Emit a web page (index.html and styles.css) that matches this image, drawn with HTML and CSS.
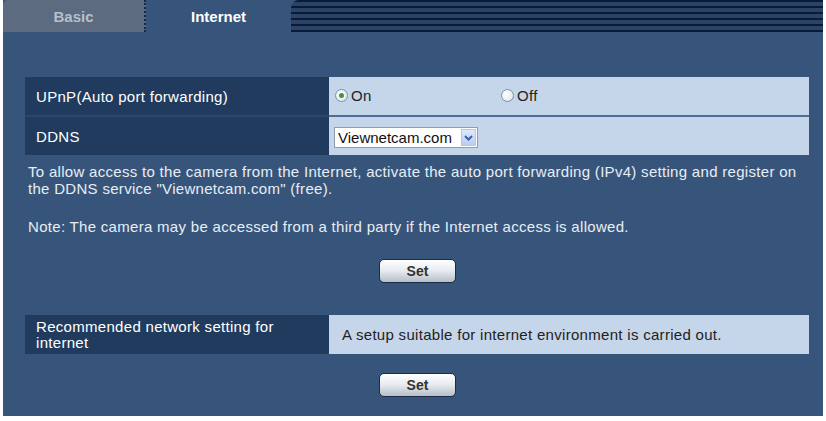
FILE: index.html
```html
<!DOCTYPE html>
<html lang="en">
<head>
    <meta charset="UTF-8">
    <meta name="viewport" content="width=device-width, initial-scale=1.0">
    <title>Internet</title>
    <link rel="stylesheet" href="styles.css">
</head>
<body>
    <div class="panel">
        <div class="tabs">
            <div class="tab tab-basic">Basic</div>
            <div class="tab tab-active">Internet</div>
            <div class="tab-rest"></div>
        </div>
        <div class="content">
            <table class="settings">
                <tr>
                    <th class="sep">UPnP(Auto port forwarding)</th>
                    <td class="sep">
                        <label class="radio"><span class="dot checked"></span>On</label>
                        <label class="radio radio-off"><span class="dot"></span>Off</label>
                    </td>
                </tr>
                <tr>
                    <th>DDNS</th>
                    <td>
                        <div class="select">
                            <span class="select-text">Viewnetcam.com</span>
                            <span class="select-arrow">
                                <svg width="9" height="6" viewBox="0 0 9 6"><path d="M1 1 L4.5 4.5 L8 1" fill="none" stroke="#3a5fb0" stroke-width="2"/></svg>
                            </span>
                        </div>
                    </td>
                </tr>
            </table>
            <p class="info">To allow access to the camera from the Internet, activate the auto port forwarding (IPv4) setting and register on the DDNS service "Viewnetcam.com" (free).</p>
            <p class="info note">Note: The camera may be accessed from a third party if the Internet access is allowed.</p>
            <div class="actions"><button class="btn">Set</button></div>

            <table class="settings second">
                <tr>
                    <th class="two-line">Recommended network setting for internet</th>
                    <td class="text-cell">A setup suitable for internet environment is carried out.</td>
                </tr>
            </table>
            <div class="actions last"><button class="btn">Set</button></div>
        </div>
    </div>
</body>
</html>
```

FILE: styles.css
```css
body {
    margin: 0;
    padding: 0;
    background-color: #fff;
    font-family: "Liberation Sans", Arial, sans-serif;
}
.panel {
    width: 820px;
    height: 416px;
    margin-left: 3px;
    background-color: #37557a;
}
.tabs {
    display: flex;
    height: 32px;
}
.tab {
    width: 143px;
    font-weight: bold;
    font-size: 15px;
    text-align: center;
    line-height: 34px;
}
.tab-basic {
    background-color: #5c6b80;
    color: #b7bfca;
    border-right: 2px dotted #13284a;
    box-sizing: border-box;
    border-top-left-radius: 5px;
}
.tab-active {
    width: 145px;
    color: #fff;
    background-color: #37557a;
}
.tab-rest {
    flex: 1;
    background: repeating-linear-gradient(to bottom, #0b1a38 0px, #0b1a38 2px, #2b4466 2px, #2b4466 6px);
    border-top-left-radius: 8px;
}
.content {
    padding: 45px 13px 0 22px;
}
.settings {
    width: 784px;
    border-collapse: collapse;
    table-layout: fixed;
    font-size: 15px;
    letter-spacing: 0.3px;
}
.settings th {
    box-sizing: border-box;
    width: 304px;
    background-color: #203b5e;
    color: #fff;
    font-weight: normal;
    text-align: left;
    padding: 0 0 0 11px;
    height: 38px;
}
.settings td {
    background-color: #c6d6ea;
    color: #222;
    padding: 0 0 0 5px;
    height: 38px;
}
.settings .sep {
    border-bottom: 2px solid #2c4669;
}
.settings td.sep {
    border-bottom-color: #4f6d94;
}
.radio {
    display: inline-flex;
    align-items: center;
    margin-left: 1px;
}
.radio-off {
    margin-left: 125px;
}
.dot {
    width: 11px;
    height: 11px;
    border: 1px solid #7f8fa6;
    border-radius: 50%;
    background: radial-gradient(circle at 40% 40%, #fff 0%, #e6e9ee 70%, #c9ced6 100%);
    margin-right: 3px;
    position: relative;
}
.dot.checked::after {
    content: "";
    position: absolute;
    left: 3px;
    top: 3px;
    width: 5px;
    height: 5px;
    border-radius: 50%;
    background-color: #3d9a3a;
}
.select {
    display: inline-flex;
    align-items: center;
    width: 144px;
    height: 21px;
    background-color: #fff;
    border: 1px solid #8e9cb0;
    box-sizing: border-box;
    margin-top: 3px;
}
.select-text {
    flex: 1;
    padding-left: 3px;
    color: #111;
    letter-spacing: 0;
}
.select-arrow {
    width: 15px;
    height: 17px;
    margin-right: 1px;
    background: linear-gradient(#dfe9fb, #b9cdf1);
    border: 1px solid #b6c6e4;
    box-sizing: border-box;
    display: flex;
    align-items: center;
    justify-content: center;
}
.info {
    width: 784px;
    margin: 8px 0 0 3px;
    color: #e8edf4;
    font-size: 15px;
    letter-spacing: 0.3px;
    line-height: 17px;
}
.note {
    margin-top: 21px;
}
.actions {
    text-align: center;
    margin-top: 24px;
}
.btn {
    width: 77px;
    height: 24px;
    border: 1px solid #1d2c44;
    border-radius: 5px;
    background: linear-gradient(#ffffff, #e6e9ee 50%, #b5bec9);
    font-family: "Liberation Sans", Arial, sans-serif;
    font-size: 14px;
    font-weight: bold;
    color: #333;
    padding: 0;
}
.second {
    margin-top: 32px;
}
.second th {
    height: 39px;
    line-height: 16px;
    padding-right: 40px;
}
.text-cell {
    padding-left: 13px !important;
}
.last {
    margin-top: 19px;
}
```
